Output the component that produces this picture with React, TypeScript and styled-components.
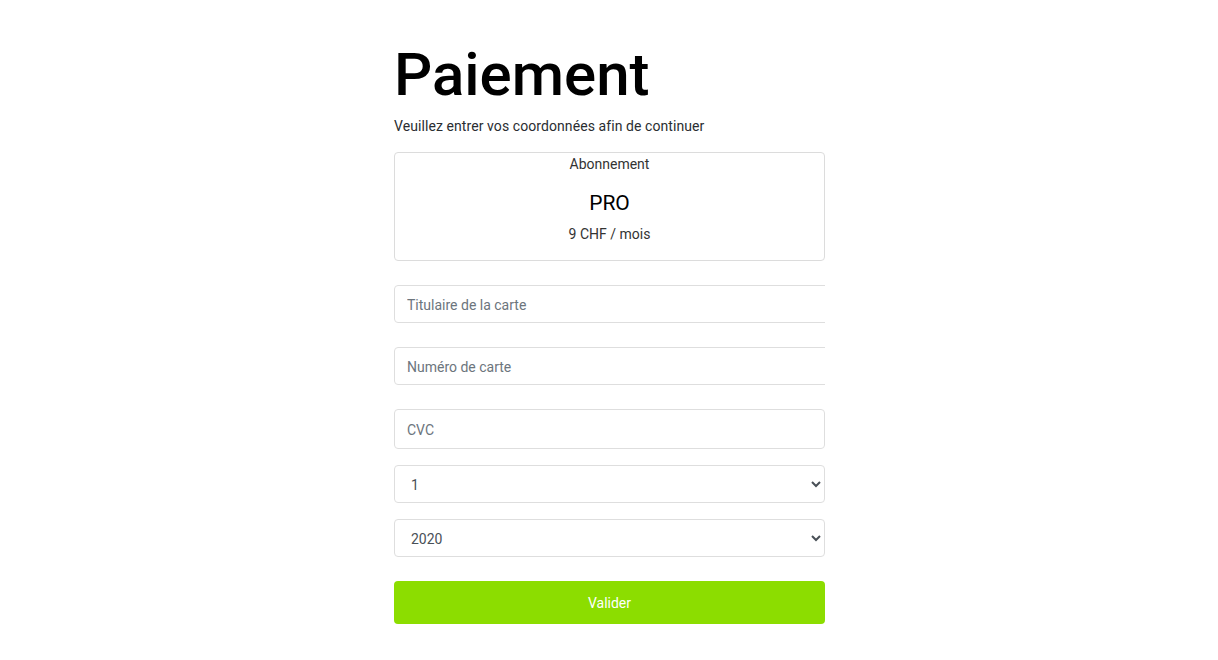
import React from "react";
import styled, { createGlobalStyle } from "styled-components";

const Global = createGlobalStyle`
  * { box-sizing: border-box; }
  body { margin: 0; background: #fff; font-family: Roboto, "Liberation Sans", Arial, sans-serif; color: #212529; }
`;

const Page = styled.div`
  display: flex;
  justify-content: center;
  padding-top: 37px;
`;

const Column = styled.div`
  width: 431px;
  margin-left: 1px;
  display: flex;
  flex-direction: column;
`;

const Title = styled.h1`
  margin: 0;
  font-size: 60px;
  font-weight: 500;
  line-height: 76px;
  color: #000;
`;

const Subtitle = styled.p`
  margin: 3px 0 16px;
  font-size: 14px;
  line-height: 20px;
  letter-spacing: 0.08px;
  color: #2a2d31;
`;

const Card = styled.div`
  border: 1px solid #dcdcdc;
  border-radius: 4px;
  height: 109px;
  display: flex;
  flex-direction: column;
  align-items: center;
  padding-top: 1px;
`;

const CardLabel = styled.div`
  font-size: 14px;
  line-height: 20px;
  color: #333;
`;

const Plan = styled.div`
  font-size: 21px;
  font-weight: 400;
  line-height: 24px;
  margin-top: 17px;
  color: #000;
`;

const Price = styled.div`
  font-size: 14px;
  line-height: 20px;
  margin-top: 9px;
  color: #333;
`;

const Form = styled.form`
  display: flex;
  flex-direction: column;
  margin-top: 24px;
`;

const Clip = styled.div<{ $gap: number }>`
  overflow: hidden;
  margin-bottom: ${(p) => p.$gap}px;
`;

const Input = styled.input<{ $h: number; $wide?: boolean }>`
  display: block;
  width: ${(p) => (p.$wide ? "calc(100% + 4px)" : "100%")};
  height: ${(p) => p.$h}px;
  padding: 2px 12px 0;
  border: 1px solid #dedede;
  border-radius: 4px;
  font-family: inherit;
  font-size: 14px;
  color: #495057;
  background: #fff;
  outline: none;
  &::placeholder { color: #6c757d; }
`;

const Select = styled.select<{ $gap: number }>`
  display: block;
  width: 100%;
  height: 38px;
  padding: 2px 12px 0 12px;
  margin-bottom: ${(p) => p.$gap}px;
  border: 1px solid #dedede;
  border-radius: 4px;
  font-family: inherit;
  font-size: 14px;
  color: #495057;
  background: #fff;
  outline: none;
`;

const Button = styled.button`
  height: 43px;
  width: 100%;
  border: none;
  border-radius: 4px;
  background: #8cdd00;
  color: #fff;
  font-family: inherit;
  font-size: 14px;
  font-weight: 400;
`;

export default function App() {
  return (
    <>
      <Global />
      <Page>
        <Column>
          <Title>Paiement</Title>
          <Subtitle>Veuillez entrer vos coordonnées afin de continuer</Subtitle>
          <Card>
            <CardLabel>Abonnement</CardLabel>
            <Plan>PRO</Plan>
            <Price>9 CHF / mois</Price>
          </Card>
          <Form onSubmit={(e) => e.preventDefault()}>
            <Clip $gap={24}>
              <Input $h={38} $wide placeholder="Titulaire de la carte" />
            </Clip>
            <Clip $gap={24}>
              <Input $h={38} $wide placeholder="Numéro de carte" />
            </Clip>
            <Clip $gap={16}>
              <Input $h={40} placeholder="CVC" />
            </Clip>
            <Select $gap={16} defaultValue="1">
              {Array.from({ length: 12 }, (_, i) => (
                <option key={i} value={String(i + 1)}>{i + 1}</option>
              ))}
            </Select>
            <Select $gap={24} defaultValue="2020">
              {[2020, 2021, 2022, 2023, 2024, 2025].map((y) => (
                <option key={y} value={String(y)}>{y}</option>
              ))}
            </Select>
            <Button type="submit">Valider</Button>
          </Form>
        </Column>
      </Page>
    </>
  );
}
